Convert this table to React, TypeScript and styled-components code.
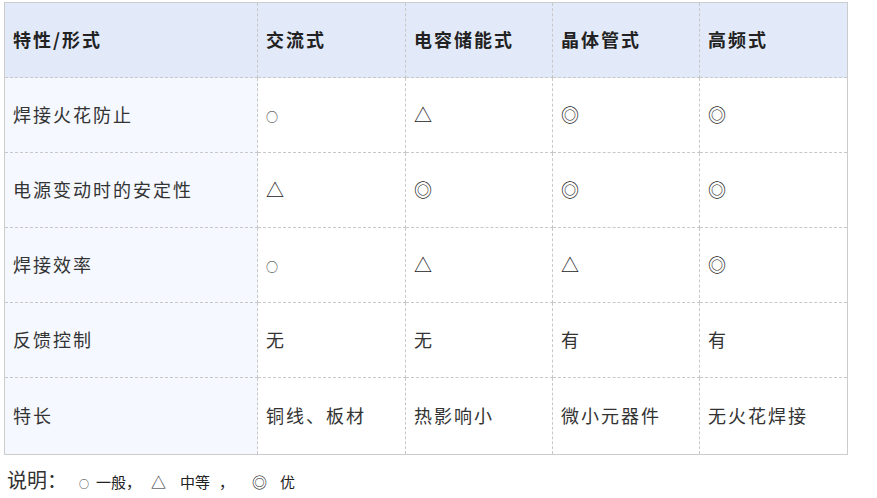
import React from 'react';
import styled, { createGlobalStyle } from 'styled-components';

const GlobalStyle = createGlobalStyle`
  body {
    margin: 0;
    background: #fff;
    font-family: "Noto Sans CJK SC", "Noto Sans", sans-serif;
  }
`;

const Page = styled.div`
  padding: 2px 0 0 4px;
`;

const Table = styled.table`
  width: 844px;
  border-collapse: collapse;
  border: 1px solid #cccccc;
  table-layout: fixed;
  font-family: "Noto Sans CJK SC", sans-serif;
`;

const Col = styled.col<{ $w: number }>`
  width: ${p => p.$w}px;
`;

const Cell = styled.td<{ $side?: boolean }>`
  box-sizing: border-box;
  height: 75px;
  padding: 0 8px 3px;
  border: 1px dashed #c8c8c8;
  font-size: 18px;
  line-height: 24px;
  letter-spacing: 2px;
  color: #333;
  vertical-align: middle;
  background: ${p => (p.$side ? '#f5f8fe' : '#ffffff')};
  tr:last-child > & {
    height: 77px;
  }
`;

const Head = styled.th`
  box-sizing: border-box;
  height: 75px;
  padding: 0 8px 3px;
  border: 1px dashed #c8c8c8;
  border-top: 1px solid #cccccc;
  font-size: 18px;
  line-height: 24px;
  letter-spacing: 2px;
  font-weight: bold;
  color: #222;
  text-align: left;
  vertical-align: middle;
  background: #e2eaf9;
`;

const Mark = styled.span<{ $small?: boolean }>`
  font-family: "Noto Sans CJK SC", sans-serif;
  font-size: ${p => (p.$small ? '12px' : '18px')};
  line-height: 1;
  letter-spacing: 0;
  color: #222;
`;

const Note = styled.div`
  display: flex;
  align-items: baseline;
  padding: 13px 0 0 3px;
  color: #222;
  font-size: 15px;
  line-height: 24px;
`;

const NoteLabel = styled.span`
  font-size: 20px;
  color: #333;
  margin-right: 12px;
`;

const NoteSymbol = styled.span<{ $small?: boolean; $gap: number }>`
  font-size: ${p => (p.$small ? '10px' : '15px')};
  margin-right: ${p => p.$gap}px;
`;

const NoteText = styled.span<{ $gap: number }>`
  margin-right: ${p => p.$gap}px;
`;

const headers = ['特性/形式', '交流式', '电容储能式', '晶体管式', '高频式'];
const widths = [253, 148, 147, 147, 148];

const rows: string[][] = [
  ['焊接火花防止', '○', '△', '◎', '◎'],
  ['电源变动时的安定性', '△', '◎', '◎', '◎'],
  ['焊接效率', '○', '△', '△', '◎'],
  ['反馈控制', '无', '无', '有', '有'],
  ['特长', '铜线、板材', '热影响小', '微小元器件', '无火花焊接'],
];

const isMark = (s: string) => s === '○' || s === '△' || s === '◎';

export default function App(): JSX.Element {
  return (
    <Page>
      <GlobalStyle />
      <Table>
        <colgroup>
          {widths.map((w, i) => (
            <Col key={i} $w={w} />
          ))}
        </colgroup>
        <thead>
          <tr>
            {headers.map(h => (
              <Head key={h}>{h}</Head>
            ))}
          </tr>
        </thead>
        <tbody>
          {rows.map(r => (
            <tr key={r[0]}>
              {r.map((c, i) => (
                <Cell key={i} $side={i === 0}>
                  {isMark(c) ? <Mark $small={c === '○'}>{c}</Mark> : c}
                </Cell>
              ))}
            </tr>
          ))}
        </tbody>
      </Table>
      <Note>
        <NoteLabel>说明：</NoteLabel>
        <NoteSymbol $small $gap={7}>○</NoteSymbol>
        <NoteText $gap={10}>一般，</NoteText>
        <NoteSymbol $gap={14}>△</NoteSymbol>
        <NoteText $gap={9}>中等</NoteText>
        <NoteText $gap={18}>，</NoteText>
        <NoteSymbol $gap={13}>◎</NoteSymbol>
        <NoteText $gap={0}>优</NoteText>
      </Note>
    </Page>
  );
}
